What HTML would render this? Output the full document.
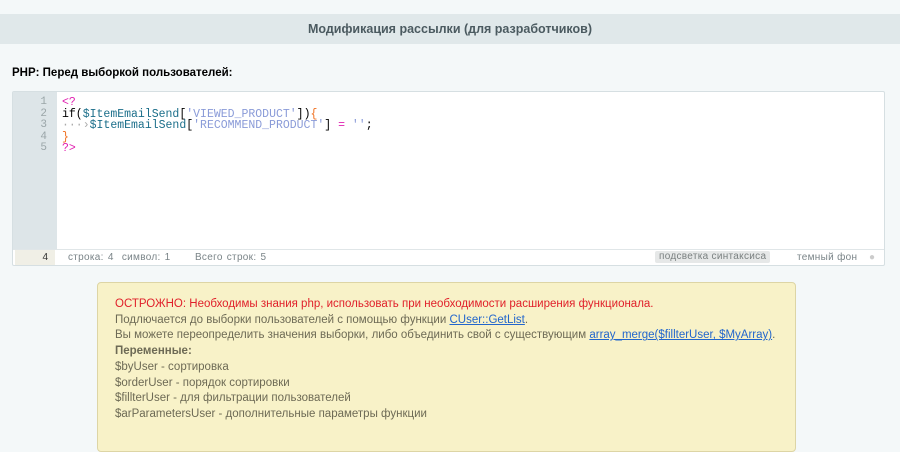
<!DOCTYPE html>
<html><head><meta charset="utf-8"><style>
*{margin:0;padding:0;box-sizing:border-box}
body{width:900px;height:443px;overflow:hidden;background:#f4f8f9;font-family:"Liberation Sans",Arial,sans-serif;position:relative}
.hdr{position:absolute;left:0;top:14px;width:900px;height:30px;background:#e0e8ea;text-align:center;font-size:12.5px;font-weight:bold;color:#4b5a60;line-height:30px}
.lbl{position:absolute;left:12px;top:67px;font-size:11.5px;font-weight:bold;color:#000}
.ed{position:absolute;left:12px;top:91px;width:873px;height:175px;background:#fff;border:1px solid #d6dfe2;border-radius:2px}
.gut{position:absolute;left:0;top:0;width:44px;height:157px;background:#dde5e8}
.nums{position:absolute;left:0;top:5px;width:34px;text-align:right;font-family:"Liberation Mono",monospace;font-size:11px;line-height:11.5px;color:#9aa5a8}
.code{position:absolute;left:49px;top:5px;font-family:"Liberation Mono",monospace;font-size:11.5px;line-height:11.5px;color:#000;white-space:pre}
.p{color:#e020b0}.v{color:#1b6e8a}.s{color:#8a9bd8}.o{color:#f07020}.g{color:#aaa}
.sb{position:absolute;left:0;top:157px;width:871px;height:16px;border-top:1px solid #e0e6e8;font-size:10px;color:#7a8488;line-height:15px}
.sb span{position:absolute}
.hl{background:#e6e8e8;padding:0 4px;border-radius:2px;color:#7a8080;letter-spacing:0.3px}
.note{position:absolute;left:97px;top:282px;width:699px;height:170px;background:#f8f2c8;border:1px solid #ddd5a5;border-radius:4px;padding:14px 0 0 17px;font-size:11.5px;line-height:15.7px;color:#6d6a55;white-space:nowrap}
.r{color:#e0202a}
a{color:#2266cc;text-decoration:underline}
</style></head><body>
<div class="hdr">Модификация рассылки (для разработчиков)</div>
<div class="lbl">PHP: Перед выборкой пользователей:</div>
<div class="ed">
<div class="gut"><div class="nums">1<br>2<br>3<br>4<br>5</div></div>
<div class="code"><span class="p">&lt;?</span>
if(<span class="v">$ItemEmailSend</span>[<span class="s">'VIEWED_PRODUCT'</span>])<span class="o">{</span>
<span class="g">···›</span><span class="v">$ItemEmailSend</span>[<span class="s">'RECOMMEND_PRODUCT'</span>] <span class="p">=</span> <span class="s">''</span>;
<span class="o">}</span>
<span class="p">?&gt;</span></div>
<div class="sb">
<span style="left:2px;width:40px;background:#f0efe6;text-align:right;padding-right:7px;color:#333">4</span>
<span style="left:55px;word-spacing:1px;letter-spacing:0.3px">строка: 4 &nbsp;символ: 1 &nbsp;&nbsp;&nbsp;&nbsp;&nbsp;Всего строк: 5</span>
<span class="hl" style="left:642px;top:1px;line-height:12px">подсветка синтаксиса</span>
<span style="left:784px;letter-spacing:0.3px">темный фон</span>
<span style="left:856px;color:#ccc">●</span>
</div>
</div>
<div class="note">
<div class="r">ОСТРОЖНО: Необходимы знания php, использовать при необходимости расширения функционала.</div>
<div>Подлючается до выборки пользователей с помощью функции <a>CUser::GetList</a>.</div>
<div>Вы можете переопределить значения выборки, либо объединить свой с существующим <a>array_merge($fillterUser, $MyArray)</a>.</div>
<div><b>Переменные:</b></div>
<div>$byUser - сортировка</div>
<div>$orderUser - порядок сортировки</div>
<div>$fillterUser - для фильтрации пользователей</div>
<div>$arParametersUser - дополнительные параметры функции</div>
</div>
</body></html>
